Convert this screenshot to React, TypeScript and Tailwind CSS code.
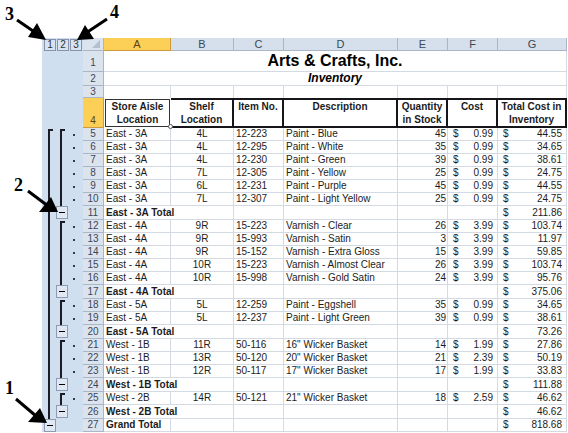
import React from "react";

type Level = "line" | "start" | "minus" | "none";

interface Row {
  n: number;
  kind: "item" | "subtotal" | "grand";
  cells: string[];
  total: string;
  one: Level;
  two: Level;
}

const item = (n: number, cells: string[], total: string, start = false): Row => ({
  n,
  kind: "item",
  cells,
  total,
  one: n === 5 ? "start" : "line",
  two: start ? "start" : "line",
});

const subtotal = (n: number, label: string, total: string): Row => ({
  n,
  kind: "subtotal",
  cells: [label, "", "", "", "", ""],
  total,
  one: "line",
  two: "minus",
});

const rows: Row[] = [
  item(5, ["East - 3A", "4L", "12-223", "Paint - Blue", "45", "0.99"], "44.55", true),
  item(6, ["East - 3A", "4L", "12-295", "Paint - White", "35", "0.99"], "34.65"),
  item(7, ["East - 3A", "4L", "12-230", "Paint - Green", "39", "0.99"], "38.61"),
  item(8, ["East - 3A", "7L", "12-305", "Paint - Yellow", "25", "0.99"], "24.75"),
  item(9, ["East - 3A", "6L", "12-231", "Paint - Purple", "45", "0.99"], "44.55"),
  item(10, ["East - 3A", "7L", "12-307", "Paint - Light Yellow", "25", "0.99"], "24.75"),
  subtotal(11, "East - 3A Total", "211.86"),
  item(12, ["East - 4A", "9R", "15-223", "Varnish - Clear", "26", "3.99"], "103.74", true),
  item(13, ["East - 4A", "9R", "15-993", "Varnish - Satin", "3", "3.99"], "11.97"),
  item(14, ["East - 4A", "9R", "15-152", "Varnish - Extra Gloss", "15", "3.99"], "59.85"),
  item(15, ["East - 4A", "10R", "15-223", "Varnish - Almost Clear", "26", "3.99"], "103.74"),
  item(16, ["East - 4A", "10R", "15-998", "Varnish - Gold Satin", "24", "3.99"], "95.76"),
  subtotal(17, "East - 4A Total", "375.06"),
  item(18, ["East - 5A", "5L", "12-259", "Paint - Eggshell", "35", "0.99"], "34.65", true),
  item(19, ["East - 5A", "5L", "12-237", "Paint - Light Green", "39", "0.99"], "38.61"),
  subtotal(20, "East - 5A Total", "73.26"),
  item(21, ["West - 1B", "11R", "50-116", '16" Wicker Basket', "14", "1.99"], "27.86", true),
  item(22, ["West - 1B", "13R", "50-120", '20" Wicker Basket', "21", "2.39"], "50.19"),
  item(23, ["West - 1B", "12R", "50-117", '17" Wicker Basket', "17", "1.99"], "33.83"),
  subtotal(24, "West - 1B Total", "111.88"),
  item(25, ["West - 2B", "14R", "50-121", '21" Wicker Basket', "18", "2.59"], "46.62", true),
  subtotal(26, "West - 2B Total", "46.62"),
  { n: 27, kind: "grand", cells: ["Grand Total", "", "", "", "", ""], total: "818.68", one: "minus", two: "none" },
];

const headings = ["Shelf Location", "Item No.", "Description", "Quantity in Stock", "Cost", "Total Cost in Inventory"];

function Slot({ level, label }: { level: Level; label: string }) {
  return (
    <div className="flex w-3">
      {level === "line" && <div className="ml-1 w-[2px] bg-[#1c1c24]" />}
      {level === "start" && <div className="mt-[1px] ml-1 w-[5px] border-t-2 border-l-2 border-[#1c1c24]" />}
      {level === "minus" && (
        <button
          type="button"
          aria-label={label}
          className="flex h-[13px] w-3 shrink-0 items-center justify-center border border-[#8e9bb0] bg-[#dfe8f3]"
        >
          <span className="h-[1px] w-[6px] bg-black" />
        </button>
      )}
    </div>
  );
}

function Outline() {
  return (
    <div className="w-[41px] shrink-0 bg-[#d0dff0]">
      <div className="flex h-[90px] items-start gap-[1px] pt-[1px] pl-[2px]">
        {[1, 2, 3].map((n) => (
          <button
            key={n}
            type="button"
            className="h-3 w-3 border border-[#8793aa] bg-[#d8e3f1] text-[10px] leading-[10px] text-[#333]"
          >
            {n}
          </button>
        ))}
      </div>
      {rows.map((r) => (
        <div key={r.n} className={`flex pl-[2px] ${r.kind === "subtotal" ? "h-[14px]" : "h-[13px]"}`}>
          <Slot level={r.one} label="Collapse grand total" />
          <Slot level={r.two} label={`Collapse ${r.cells[0]}`} />
          <div className="flex w-[12px] items-center justify-center">
            {r.kind === "item" && <div className="h-[2px] w-[2px] bg-[#333b4a]" />}
          </div>
        </div>
      ))}
    </div>
  );
}

const rowHead = "border-r border-b border-[#a9b6c6] bg-[#dbe3ee] p-0 text-center align-bottom font-normal text-[#3c4756]";
const grid = "border-r border-b border-[#d3dae3] p-0";

function Money({ value }: { value: string }) {
  return (
    <div className="flex justify-between pr-1 pl-[5px]">
      <span>$</span>
      <span>{value}</span>
    </div>
  );
}

function Sheet() {
  return (
    <table className="w-full min-w-0 flex-1 table-fixed border-separate border-spacing-0 text-[10px] leading-3 text-[#1c1c1c]">
      <colgroup>
        <col className="w-[21px]" />
        <col className="w-[67px]" />
        <col className="w-[63px]" />
        <col className="w-[50px]" />
        <col />
        <col className="w-[50px]" />
        <col className="w-[50px]" />
        <col className="w-[69px]" />
      </colgroup>
      <thead>
        <tr className="h-[13px]">
          <th className={rowHead}>
            <svg viewBox="0 0 20 12" className="block h-3 w-5">
              <path d="M17 2v8H9z" fill="#b3bfce" />
            </svg>
          </th>
          {["A", "B", "C", "D", "E", "F", "G"].map((c) => (
            <th
              key={c}
              scope="col"
              className={`border-r border-b p-0 text-[11px] leading-3 font-normal ${
                c === "A" ? "border-[#d09a3c] bg-[#fccf57] text-[#5b4410]" : "border-[#a9b6c6] bg-[#d5e0ec] text-[#3c4756]"
              }`}
            >
              {c}
            </th>
          ))}
        </tr>
      </thead>
      <tbody>
        <tr className="h-[21px]">
          <th scope="row" className={`${rowHead} pb-[2px]`}>1</th>
          <td colSpan={7} className={`${grid} text-center text-[16px] leading-5 font-bold text-black`}>
            Arts &amp; Crafts, Inc.
          </td>
        </tr>
        <tr className="h-[14px]">
          <th scope="row" className={rowHead}>2</th>
          <td colSpan={7} className={`${grid} text-center text-[12px] leading-[13px] font-bold text-black italic`}>
            Inventory
          </td>
        </tr>
        <tr className="h-3">
          <th scope="row" className={`${rowHead} leading-[11px]`}>3</th>
          {["A", "B", "C", "D", "E", "F", "G"].map((c) => (
            <td key={c} className="border-r border-[#d3dae3] p-0" />
          ))}
        </tr>
        <tr className="h-[30px]">
          <th scope="row" className="border-r border-b border-[#d09a3c] bg-[#fccf57] p-0 text-center align-bottom font-normal text-[#5b4410]">
            4
          </th>
          <th scope="col" className="relative p-[1px] align-top">
            <div className="h-7 border border-[#333] px-1 leading-[13px]">Store Aisle Location</div>
            <span className="absolute -right-[2px] -bottom-[1px] z-10 h-[5px] w-[5px] rounded-full border border-[#555] bg-white" />
          </th>
          {headings.map((h) => (
            <th
              key={h}
              scope="col"
              className={`border-y-2 border-r-2 border-[#15151a] p-0 align-top leading-[13px] ${
                h === "Shelf Location" ? "px-2" : ""
              }`}
            >
              {h}
            </th>
          ))}
        </tr>
        {rows.map((r) => {
          const [aisle, shelf, no, desc, qty, cost] = r.cells;
          const sub = r.kind === "subtotal";
          return (
            <tr key={r.n} className={sub ? "h-[14px]" : "h-[13px]"}>
              <th scope="row" className={rowHead}>{r.n}</th>
              <td
                className={`border-b border-[#d3dae3] p-0 pl-[2px] whitespace-nowrap ${sub ? "" : "border-r"} ${
                  r.kind === "item" ? "" : "font-bold"
                }`}
              >
                {aisle}
              </td>
              <td className={`${grid} text-center`}>{shelf}</td>
              <td className={`${grid} pl-[2px]`}>{no}</td>
              <td className={`${grid} pl-[2px] whitespace-nowrap`}>{desc}</td>
              <td className={`${grid} pr-[1px] text-right`}>{qty}</td>
              <td className={grid}>{cost && <Money value={cost} />}</td>
              <td className={grid}><Money value={r.total} /></td>
            </tr>
          );
        })}
      </tbody>
    </table>
  );
}

function Callouts() {
  const label = "absolute font-['Liberation_Serif',serif] text-[18px] leading-5 font-bold text-black";
  return (
    <div className="pointer-events-none absolute inset-0">
      <svg width="120" height="433" viewBox="0 0 120 433" className="absolute top-0 left-0">
        <g stroke="#000" strokeWidth="3">
          <path d="M17 20 36 33M107 19 86 33M28 191 48 206M16 399 36 416" />
        </g>
        <path d="M46 40 37 23 28 37zM77 40 94 39 85 25zM58 212 51 197 39 212zM47 423 40 408 28 422z" />
      </svg>
      <span className={`${label} top-[4px] left-[5px]`}>3</span>
      <span className={`${label} top-[2px] left-[110px]`}>4</span>
      <span className={`${label} top-[175px] left-[14px]`}>2</span>
      <span className={`${label} top-[378px] left-[5px]`}>1</span>
    </div>
  );
}

export default function App() {
  return (
    <div className="relative bg-white pt-[38px] pr-[1px] pl-[42px] font-['Liberation_Sans',Arial,sans-serif]">
      <div className="flex items-start">
        <Outline />
        <Sheet />
      </div>
      <Callouts />
    </div>
  );
}
